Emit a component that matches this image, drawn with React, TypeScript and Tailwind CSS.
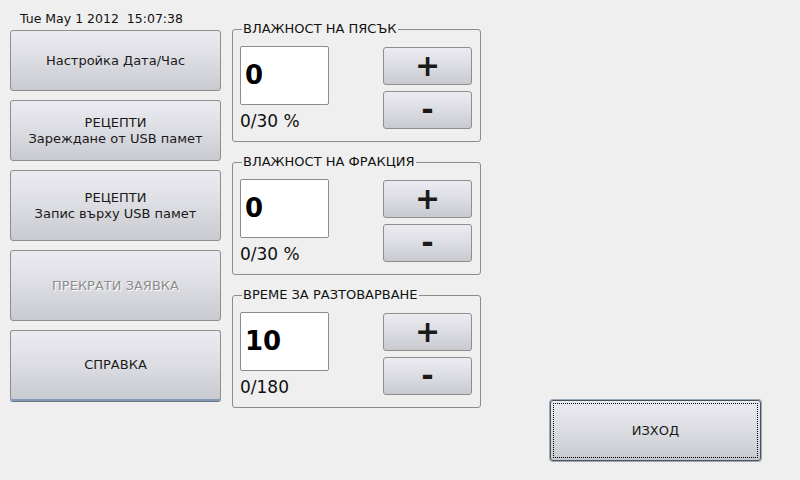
const font = "font-['DejaVu_Sans',sans-serif]"

const btn =
  'flex flex-col items-center justify-center rounded-[3px] border border-[#8e8e8e] bg-linear-to-b from-[#ebebf2] via-[#dcdde2] to-[#c9cad0] text-[13px] leading-[16px] text-[#1a1a1a]'

type ValueGroupProps = {
  title: string
  value: string
  range: string
}

function ValueGroup({ title, value, range }: ValueGroupProps) {
  return (
    <fieldset className="h-[121px] rounded-[3px] border border-[#8c8c8c] pl-[7px] pr-[8px]">
      <legend className="ml-[2px] px-[1px] text-[13px] leading-[16px] text-[#111]">{title}</legend>
      <div className="flex justify-between pt-[9px]">
        <div className="flex flex-col">
          <div className="flex h-[59px] w-[89px] items-center rounded-[2px] border border-[#8c8c8c] bg-white pl-[4px] text-[26px] font-bold text-black">
            {value}
          </div>
          <div className="mt-[6px] text-[17px] leading-[20px] text-[#111]">{range}</div>
        </div>
        <div className="mt-[1px] flex flex-col gap-[6px]">
          <button type="button" className={`${btn} h-[38px] w-[89px] text-[30px] font-bold leading-none`}>
            +
          </button>
          <button type="button" className={`${btn} h-[38px] w-[89px] text-[30px] font-bold leading-none`}>
            -
          </button>
        </div>
      </div>
    </fieldset>
  )
}

export default function App() {
  return (
    <div className={`${font} flex h-[480px] w-[800px] bg-[#efefef] pl-[10px]`}>
      <div className="flex w-[211px] flex-col">
        <div className="h-[30px] whitespace-pre pl-[10px] pt-[12px] text-[12.5px] leading-[14px] text-[#111]">
          Tue May 1 2012  15:07:38
        </div>
        <div className="flex flex-col gap-[9px]">
          <button type="button" className={`${btn} h-[61px]`}>
            Настройка Дата/Час
          </button>
          <button type="button" className={`${btn} h-[61px]`}>
            <span>РЕЦЕПТИ</span>
            <span>Зареждане от USB памет</span>
          </button>
          <button type="button" className={`${btn} h-[71px]`}>
            <span>РЕЦЕПТИ</span>
            <span>Запис върху USB памет</span>
          </button>
          <button
            type="button"
            disabled
            className={`${btn} h-[71px] text-[#8c8c8c] [text-shadow:1px_1px_0_#ffffff]`}
          >
            ПРЕКРАТИ ЗАЯВКА
          </button>
          <button
            type="button"
            className={`${btn} h-[71px] border-[#8d9db0] border-b-2 border-b-[#7f9ab9] shadow-[0_1px_0_#6b7480]`}
          >
            СПРАВКА
          </button>
        </div>
      </div>
      <div className="ml-[11px] flex w-[249px] flex-col gap-[12px] pt-[21px]">
        <ValueGroup title="ВЛАЖНОСТ НА ПЯСЪК" value="0" range="0/30 %" />
        <ValueGroup title="ВЛАЖНОСТ НА ФРАКЦИЯ" value="0" range="0/30 %" />
        <ValueGroup title="ВРЕМЕ ЗА РАЗТОВАРВАНЕ" value="10" range="0/180" />
      </div>
      <div className="ml-[69px] flex flex-col justify-end pb-[19px]">
        <button
          type="button"
          className={`${btn} relative h-[61px] w-[211px] border-[#48525e] shadow-[0_0_0_1px_#9aa8b8]`}
        >
          <span className="absolute inset-[2px] border border-dotted border-black" />
          ИЗХОД
        </button>
      </div>
    </div>
  )
}
